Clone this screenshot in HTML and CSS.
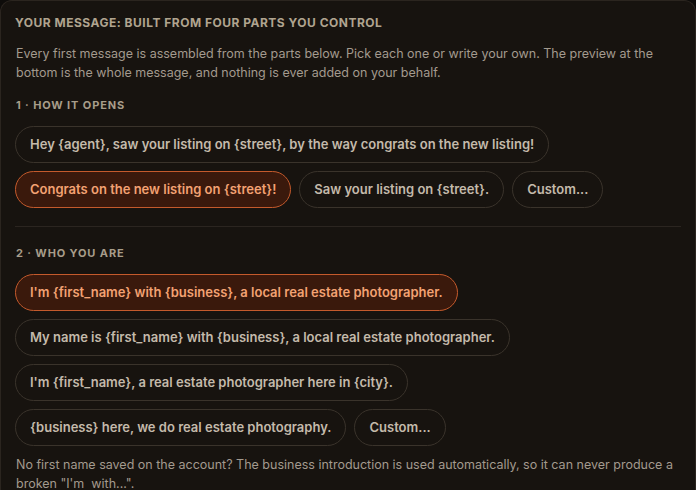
FILE: index.html
```html
<!DOCTYPE html>
<html lang="en">
<head>
    <meta charset="UTF-8">
    <meta name="viewport" content="width=device-width, initial-scale=1.0">
    <title>Your message</title>
    <link rel="stylesheet" href="styles.css">
</head>
<body>
    <div class="message-card">
        <!-- Judul dan penjelasan -->
        <h2 class="card-title">Your message: built from four parts you control</h2>
        <p class="card-intro">Every first message is assembled from the parts below. Pick each one or write your own. The preview at the bottom is the whole message, and nothing is ever added on your behalf.</p>

        <!-- Bagian 1 -->
        <div class="part">
            <h3 class="part-label">1 · How it opens</h3>
            <div class="options">
                <button class="option">Hey {agent}, saw your listing on {street}, by the way congrats on the new listing!</button>
                <button class="option selected">Congrats on the new listing on {street}!</button>
                <button class="option">Saw your listing on {street}.</button>
                <button class="option">Custom...</button>
            </div>
        </div>

        <hr class="divider">

        <!-- Bagian 2 -->
        <div class="part">
            <h3 class="part-label">2 · Who you are</h3>
            <div class="options">
                <button class="option selected">I'm {first_name} with {business}, a local real estate photographer.</button>
                <button class="option">My name is {first_name} with {business}, a local real estate photographer.</button>
                <button class="option">I'm {first_name}, a real estate photographer here in {city}.</button>
                <button class="option">{business} here, we do real estate photography.</button>
                <button class="option">Custom...</button>
            </div>
            <p class="part-note">No first name saved on the account? The business introduction is used automatically, so it can never produce a broken "I'm&nbsp; with...".</p>
        </div>
    </div>
</body>
</html>
```

FILE: styles.css
```css
/* Gaya umum untuk body */
body {
    margin: 0;
    background: #0e0c0a;
    font-family: Inter, sans-serif;
    color: #a39a8e;
}

/* Kartu utama */
.message-card {
    box-sizing: border-box;
    min-height: 100vh;
    background: #17130f;
    border: 1px solid #2b251f;
    border-bottom: none;
    border-radius: 12px 12px 0 0;
    padding: 14px 14px 0;
}

.card-title {
    margin: 0;
    font-size: 12px;
    line-height: 16px;
    font-weight: 700;
    letter-spacing: 0.5px;
    text-transform: uppercase;
    color: #b0a48f;
}

.card-intro {
    margin: 13px 0 0;
    font-size: 12.5px;
    line-height: 19px;
    padding-left: 1px;
}

.part {
    margin-top: 15px;
}

.part-label {
    margin: 0 0 13px;
    padding-left: 1px;
    font-size: 11px;
    line-height: 16px;
    font-weight: 700;
    letter-spacing: 0.08em;
    text-transform: uppercase;
    color: #a89d8a;
}

/* Pilihan berbentuk pill */
.options {
    display: flex;
    flex-wrap: wrap;
    gap: 8px;
}

.option {
    font-family: Inter, sans-serif;
    font-size: 13px;
    line-height: 17px;
    font-weight: 600;
    color: #c4baab;
    background: transparent;
    border: 1px solid #3a332b;
    border-radius: 999px;
    padding: 9px 14px;
    cursor: pointer;
}

.option.selected {
    background: #3a190c;
    border-color: #c45a2c;
    color: #f3a273;
}

.divider {
    border: none;
    border-top: 1px solid #2b2520;
    margin: 18px 0 0;
}

.divider + .part {
    margin-top: 18px;
}

.part-note {
    margin: 9px 0 0;
    padding-left: 1px;
    font-size: 12.5px;
    line-height: 19px;
}
```
